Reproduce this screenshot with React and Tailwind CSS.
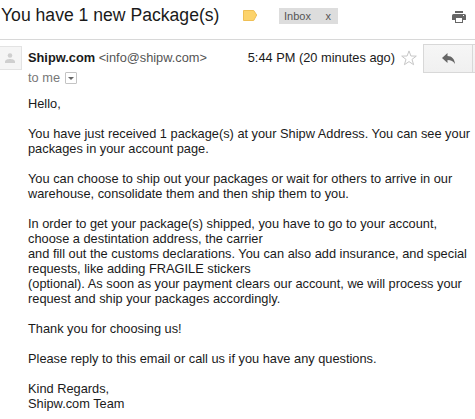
const paragraphs = [
  ["Hello,"],
  [
    "You have just received 1 package(s) at your Shipw Address. You can see your",
    "packages in your account page.",
  ],
  [
    "You can choose to ship out your packages or wait for others to arrive in our",
    "warehouse, consolidate them and then ship them to you.",
  ],
  [
    "In order to get your package(s) shipped, you have to go to your account,",
    "choose a destintation address, the carrier",
    "and fill out the customs declarations. You can also add insurance, and special",
    "requests, like adding FRAGILE stickers",
    "(optional). As soon as your payment clears our account, we will process your",
    "request and ship your packages accordingly.",
  ],
  ["Thank you for choosing us!"],
  ["Please reply to this email or call us if you have any questions."],
  ["Kind Regards,", "Shipw.com Team"],
];

function ImportantMarker() {
  return (
    <svg width="15" height="12" viewBox="0 0 15 12" className="ml-6 mt-[9px] shrink-0">
      <path d="M.5 1.500h10.200L13.700 6l-3 5.500H.5z" fill="#fcd36c" stroke="#efbf55" />
    </svg>
  );
}

function PrinterIcon() {
  return (
    <svg width="14" height="12" viewBox="0 0 14 12" fill="#666" className="mt-[11px] shrink-0">
      <path d="M3 0h8v2H3z" />
      <path d="M1.500 3h11A1.500 1.500 0 0 1 14 4.500V9h-3V6.500H3V9H0V4.500A1.500 1.500 0 0 1 1.500 3z" />
      <path d="M3 6h8v6H3zM4 7v4h6V7z" fillRule="evenodd" />
      <path d="M11 4h1v1h-1z" fill="#fff" />
    </svg>
  );
}

function StarIcon() {
  return (
    <svg width="16" height="16" viewBox="0 0 16 16" className="ml-[6px] mt-[6px] shrink-0">
      <path
        d="M8 .9l1.900 5.100 5.400.1-4.300 3.300 1.600 5.300L8 11.600l-4.600 3.100L5 9.400.7 6.100 6.100 6z"
        fill="#fff"
        stroke="#c6c6c6"
      />
    </svg>
  );
}

function Avatar() {
  return (
    <div className="mt-[2px] flex h-6 w-[22px] shrink-0 items-center justify-center border border-l-0 border-[#e3e3e3] bg-[#f5f5f5]">
      <svg width="10" height="10" viewBox="0 0 10 10" fill="#cfcfcf" className="mr-px">
        <circle cx="5" cy="2.500" r="2.300" />
        <path d="M0 10V8.500C0 6.800 3.200 6 5 6s5 .8 5 2.500V10z" />
      </svg>
    </div>
  );
}

export default function App() {
  return (
    <main className="h-[419px] w-[475px] overflow-hidden bg-white font-['Liberation_Sans',Arial,sans-serif] text-[12.8px] leading-[15px] text-[#1a1a1a]">
      {/* Subject */}
      <header className="flex h-10 items-start border-b border-[#d8d8d8]">
        <h1 className="ml-px w-[218px] whitespace-nowrap pt-1 text-[17.6px] leading-[22px]">You have 1 new Package(s)</h1>
        <ImportantMarker />
        <div className="ml-[21px] mt-2 flex h-4 w-[59px] items-center justify-between bg-[#ddd] pl-[5px] pr-[7px] text-[11px] text-[#555]">
          <span>Inbox</span>
          <button className="leading-[15px]">x</button>
        </div>
        <div className="ml-auto mr-[9px]">
          <PrinterIcon />
        </div>
      </header>

      {/* Sender */}
      <section className="flex h-14 items-start pt-1">
        <Avatar />
        <div className="ml-[6px] whitespace-nowrap pt-[6px]">
          <div>
            <span className="font-bold">Shipw.com</span>{" "}
            <span className="text-[#555]">&lt;info@shipw.com&gt;</span>
          </div>
          <div className="mt-[5px] flex items-center text-[#777]">
            <span>to me</span>
            <button className="ml-[5px] mt-px flex size-3 items-center justify-center rounded-[1px] border border-[#c4c4c4]">
              <svg width="6" height="3" viewBox="0 0 6 3" fill="#666">
                <path d="M0 0h6L3 3z" />
              </svg>
            </button>
          </div>
        </div>
        <span className="ml-auto whitespace-nowrap pt-[6px]">5:44 PM (20 minutes ago)</span>
        <StarIcon />
        <div className="ml-[6px] flex h-[29px] w-[52px] shrink-0 border border-r-0 border-[#d8d8d8] bg-linear-to-b from-[#f6f6f6] to-[#f0f0f0]">
          <button className="flex w-[49px] items-center justify-center border-r border-[#d8d8d8]">
            <svg width="13" height="11" viewBox="0 0 13 11" fill="#666">
              <path d="M5.500 0v3C10 3 12.500 6 13 11 11.500 8.500 9 7 5.500 7v3L0 5z" />
            </svg>
          </button>
        </div>
      </section>

      {/* Message body */}
      <article className="space-y-[15px] pl-7">
        {paragraphs.map((lines, i) => (
          <p key={i}>
            {lines.map((line) => (
              <span key={line} className="block whitespace-nowrap">
                {line}
              </span>
            ))}
          </p>
        ))}
      </article>
    </main>
  );
}
